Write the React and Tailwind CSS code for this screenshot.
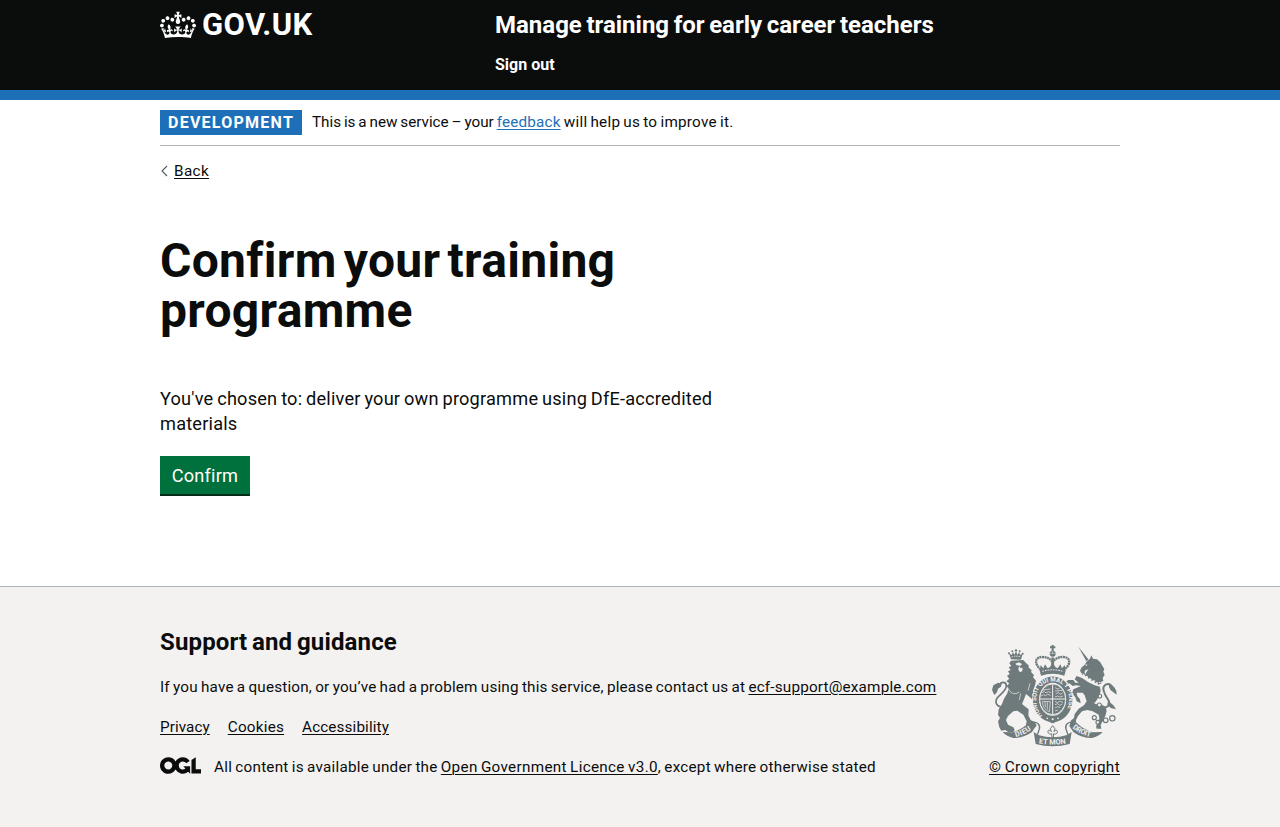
import React from 'react';

function Crown() {
  return (
    <svg className="h-[30px] w-9 shrink-0" viewBox="0 0 132 97" fill="currentColor" aria-hidden="true">
      <path
        fillRule="evenodd"
        d="M25 30.2c3.5 1.5 7.7-.2 9.1-3.7 1.5-3.6-.2-7.8-3.9-9.2-3.6-1.4-7.6.3-9.1 3.9-1.4 3.5.3 7.5 3.9 9zM9 39.5c3.6 1.5 7.8-.2 9.2-3.7 1.5-3.6-.2-7.8-3.9-9.1-3.6-1.5-7.6.2-9.1 3.8-1.4 3.5.3 7.5 3.8 9zM4.4 57.2c3.5 1.5 7.7-.2 9.1-3.8 1.5-3.6-.2-7.7-3.9-9.1-3.5-1.5-7.6.3-9.1 3.8-1.4 3.5.3 7.6 3.9 9.1zm38.3-21.4c3.5 1.5 7.7-.2 9.1-3.8 1.5-3.6-.2-7.7-3.9-9.1-3.6-1.5-7.6.3-9.1 3.8-1.3 3.6.4 7.7 3.9 9.1zm64.4-5.6c-3.6 1.5-7.8-.2-9.1-3.7-1.5-3.6.2-7.8 3.8-9.2 3.6-1.4 7.7.3 9.2 3.9 1.3 3.5-.4 7.5-3.9 9zm15.9 9.3c-3.6 1.5-7.7-.2-9.1-3.7-1.5-3.6.2-7.8 3.7-9.1 3.6-1.5 7.7.2 9.2 3.8 1.5 3.5-.3 7.5-3.8 9zm4.7 17.7c-3.6 1.5-7.8-.2-9.2-3.8-1.5-3.6.2-7.7 3.9-9.1 3.6-1.5 7.7.3 9.2 3.8 1.3 3.5-.4 7.6-3.9 9.1zM89.3 35.8c-3.6 1.5-7.8-.2-9.2-3.8-1.4-3.6.2-7.7 3.9-9.1 3.6-1.5 7.7.3 9.2 3.8 1.4 3.6-.3 7.7-3.9 9.1zM69.7 17.7l8.9 4.7V9.3l-8.9 2.8c-.2-.3-.5-.6-.9-.9L72.4 0H59.6l3.5 11.2c-.3.3-.6.5-.9.9l-8.8-2.8v13.1l8.8-4.7c.3.3.6.7.9.9l-5 15.4v.1c-.2.8-.4 1.6-.4 2.4 0 4.1 3.1 7.5 7 8.1h.2c.3 0 .7.1 1 .1.4 0 .7 0 1-.1h.2c4-.6 7.1-4.1 7.1-8.1 0-.8-.1-1.7-.4-2.4V34l-5.1-15.4c.4-.2.7-.6 1-.9zM66 92.8c16.9 0 32.8 1.1 47.1 3.2 4-16.9 8.9-26.7 14-33.5l-9.6-3.4c1 4.9 1.1 7.2 0 10.2-1.5-1.4-3-4.3-4.2-8.7L108.6 76c2.8-2 5-3.2 7.5-3.3-4.4 9.4-10 11.9-13.6 11.2-4.3-.8-6.3-4.6-5.6-7.9 1-4.7 5.7-5.9 8-.5 4.3-8.7-3-11.4-7.6-8.8 7.1-7.2 7.9-13.5 2.1-21.1-8 6.1-8.1 12.3-4.5 20.8-4.7-5.4-12.1-2.5-9.5 6.2 3.4-5.2 7.9-2 7.2 3.1-.6 4.3-6.4 7.8-13.5 7.2-10.3-.9-10.9-8-11.2-13.8 2.5-.5 7.1 1.8 11 7.3L80.2 60c-4.1 4.4-8 5.3-12.3 5.4 1.4-4.4 8-11.6 8-11.6H55.5s6.4 7.2 7.9 11.6c-4.2-.1-8-1-12.3-5.4l1.4 16.4c3.9-5.5 8.5-7.7 10.9-7.3-.3 5.8-.9 12.8-11.1 13.8-7.2.6-12.9-2.9-13.5-7.2-.7-5 3.8-8.3 7.1-3.1 2.7-8.7-4.6-11.6-9.4-6.2 3.7-8.5 3.6-14.7-4.6-20.8-5.8 7.6-5 13.9 2.2 21.1-4.7-2.6-11.9.1-7.7 8.8 2.3-5.5 7.1-4.2 8.1.5.7 3.3-1.3 7.1-5.7 7.9-3.5.7-9-1.8-13.5-11.2 2.5.1 4.7 1.3 7.5 3.3l-4.7-15.4c-1.2 4.4-2.7 7.2-4.3 8.7-1.1-3-.9-5.3 0-10.2l-9.5 3.4c5 6.9 9.9 16.7 14 33.5 14.8-2.1 30.8-3.2 47.7-3.2z"
      />
    </svg>
  );
}

function OglMark() {
  return (
    <svg className="h-[17px] w-[41px] shrink-0" viewBox="0 0 483.2 195.7" fill="currentColor" aria-hidden="true">
      <path d="M421.5 142.8V.1l-50.7 32.3v161.1h112.4v-50.7zm-122.3-9.6A47.12 47.12 0 0 1 221 97.8c0-26 21.1-47.1 47.1-47.1 16.7 0 31.4 8.7 39.7 21.8l42.7-27.2A97.63 97.63 0 0 0 268.1 0c-36.5 0-68.3 20.1-85.1 49.7A98 98 0 0 0 97.8 0C43.9 0 0 43.9 0 97.8s43.9 97.8 97.8 97.8c36.5 0 68.3-20.1 85.1-49.7a97.76 97.76 0 0 0 149.6 25.4l19.4 22.2h3v-87.8h-80l24.3 27.5zM97.8 145c-26 0-47.1-21.1-47.1-47.1s21.1-47.1 47.1-47.1 47.1 21.1 47.1 47.1S123.8 145 97.8 145" />
    </svg>
  );
}

function RoyalArms() {
  return (
    <svg className="h-[102px] w-[125px]" viewBox="18 15 375 306" fill="#6f7a7c" aria-hidden="true">
      {/* lion */}
      <path d="M75 58l-6-18 8 5 4-8 5 7 4-12 4 12 6-7 2 8 8-4-5 18z" />
      <g>
        <circle cx="69" cy="40" r="3" />
        <circle cx="79" cy="34" r="3" />
        <circle cx="90" cy="31" r="3.5" />
        <circle cx="101" cy="34" r="3" />
        <circle cx="110" cy="41" r="3" />
      </g>
      <path d="M77 51q14-5 28 0" fill="none" stroke="#f3f2f1" strokeWidth="3" strokeDasharray="4 3" />
      <path d="M75 62L112 60L120 69L129 77L127 82L137 91L135 96L144 105L141 112L150 122L146 140L142 152L146 166L156 178L158 188L144 186L132 172L120 162L114 178L108 192L118 200L128 208L127 226L134 240L146 247L152 256L148 262L126 262L120 254L122 244L112 224L94 212L82 214L66 228L60 240L66 254L82 262L86 270L82 276L66 276L58 270L46 272L40 262L36 244L42 234L36 224L38 208L48 192L54 176L64 160L68 146L62 138L70 130L61 124L70 116L63 108L71 102L66 94L74 90L68 82L76 78L70 70Z" />
      <path d="M88 71l10-4 10 5-4 5-12-1zM99 79l6 6 5-2-1 10-7 4-5-8z" fill="#f3f2f1" />
      <path d="M68 148Q80 170 100 156M104 160l-4 20M132 130l-6 22" fill="none" stroke="#f3f2f1" strokeWidth="2" />
      <path d="M56 201l-10 0c-15-2-22-16-10-30 11-12 25-20 25-34-1-12-17-14-21 0" fill="none" stroke="#6f7a7c" strokeWidth="5" />
      <path d="M36 128l-14 8-4 14 7 15 8-8 3-11 9-6 2-9z" />
      {/* unicorn */}
      <path d="M277 20l30 38-6 6z" />
      <path d="M304 62l8-6 4-10 5 10 12 2 10 9 6 10 6 10-3 8 4 10-6 8 2 10-8 3-8 0-10-5-14-6-14-13 6-10 4-4-10 3-4 8-8 1-4-8 5-10 8-6z" />
      <circle cx="301" cy="75" r="2.5" fill="#f3f2f1" />
      <path d="M288 104l6-6 5 9 7-3 2 10 9-4 1 11 9-5 1 11 9-4 0 9 9-4" fill="none" stroke="#6f7a7c" strokeWidth="3.5" />
      <path d="M288 114L306 126L326 136L342 140L344 154L338 170L330 184L324 190L336 194L348 194L358 200L362 212L358 228L348 246L344 256L346 266L332 266L330 258L338 250L340 234L338 224L320 214L304 210L288 214L276 228L270 240L270 246L256 250L254 242L264 234L266 222L278 206L294 196L302 184L296 166L290 158L272 158L274 168L282 178L284 190L272 184L268 172L258 160L262 148L276 142L284 138L270 136L260 138L250 130L242 134L240 126L246 120L262 120L268 128L278 128L266 118L272 108Z" />
      <g fill="none" stroke="#6f7a7c" strokeWidth="3.5">
        <circle cx="325" cy="233" r="6" />
        <circle cx="336" cy="247" r="6" />
        <circle cx="359" cy="241" r="7" />
        <circle cx="379" cy="235" r="8" />
        <circle cx="340" cy="195" r="6" fill="#f3f2f1" />
        <circle cx="341" cy="168" r="6" />
        <path d="M331 242l4-2M342 245l11-4" />
      </g>
      <path d="M352 204c14-2 22-10 16-22-8-14-20-28-15-42 5-9 18-11 23-2 3 5 2 8 4 14" fill="none" stroke="#6f7a7c" strokeWidth="6" />
      <path d="M368 133l10 2 8 8 5 10 1 11-10-7-9-8-4-8zM366 184l12 8 6 6 6 10-16-4-10-10z" />
      {/* garter and shield */}
      <ellipse cx="200" cy="177" rx="61" ry="71" fill="#f3f2f1" />
      {/* crown above the shield */}
      <g fill="none" stroke="#6f7a7c">
        <path d="M164 88c-21-17-17-38 6-37 16 0 29 8 30 21 1-13 14-21 30-21 23-1 27 20 6 37" strokeWidth="7" strokeDasharray="6 1.5" />
        <path d="M200 15v22M192 22h16" strokeWidth="6" />
        <path d="M200 52v30" strokeWidth="7" />
      </g>
      <circle cx="200" cy="41" r="9" />
      <path d="M192 40h16M200 33v7" stroke="#f3f2f1" strokeWidth="1.5" />
      <path d="M161 92l3-17 8 10 5-12 8 12 7-4 8-15 8 15 7 4 8-12 5 12 8-10 3 17-4 15q-35-12-70 0z" />
      <path d="M169 94q31-9 62 0" fill="none" stroke="#f3f2f1" strokeWidth="3" strokeDasharray="5 3" />
      <ellipse cx="200" cy="178" rx="50" ry="59" fill="none" stroke="#6f7a7c" strokeWidth="19" />
      <path id="garter" d="M169 227C140 198 142 125 200 125S260 198 231 227" fill="none" />
      <text fill="#f3f2f1" fontFamily="Roboto, sans-serif" fontSize="19" fontWeight="700">
        <textPath href="#garter" textLength="244" lengthAdjust="spacingAndGlyphs">HONI SOIT QUI MAL Y PENSE</textPath>
      </text>
      <ellipse cx="200" cy="178" rx="39" ry="46" />
      <g stroke="#f3f2f1" fill="none" strokeWidth="2">
        <ellipse cx="200" cy="178" rx="39" ry="46" strokeWidth="2.5" />
        <path d="M200 134v88M162 177h76" strokeWidth="3" />
        <path d="M171 150l22-3M167 159l8-5 5 5 7-4 8 3M165 168l8-4 5 3 7-4 9 3" />
        <path d="M207 143l8 4 6-3M207 153l22-2M209 162l8-5 5 6 8-4M207 171l8-3 6 3 10-3" />
        <path d="M207 184l8 4 6-4 10 3M207 194l8-3 6 5 8-4M207 204l8-4 8 3M207 213l9-3" />
        <path d="M170 184c-1 15 6 26 20 31l3-30zM177 186l1 16M184 186v22" />
      </g>
      <circle cx="200" cy="241" r="9" />
      <g fill="#f3f2f1">
        <circle cx="184" cy="235" r="2.5" />
        <circle cx="200" cy="238" r="3" />
        <circle cx="216" cy="235" r="2.5" />
      </g>
      {/* fleur-de-lis */}
      <path d="M200 257l7 9-3 9c6-8 13-4 9 4-3 4-7 4-10 2l-1 12h-4l-1-12c-3 2-7 2-10-2-4-8 3-12 9-4l-3-9z" fill="none" stroke="#6f7a7c" strokeWidth="3" />
      {/* motto scroll */}
      <path d="M50 276l30 1q28-8 50-30l16-2 4 13-12 18q-24 18-56 18-20-4-32-18z" />
      <path d="M350 276l-30 1q-28-8-50-30l-16-2-4 13 12 18q24 18 56 18 20-4 32-18z" />
      <path d="M136 247c18-4 28 8 24 20l-6 18M264 247c-18-4-28 8-24 20l6 18" fill="none" stroke="#6f7a7c" strokeWidth="4" />
      <path d="M143 276l14 9q43 14 86 0l14-9-6 36q-51 14-102 0z" />
      <path id="motto-left" d="M89 291q27-6 50-25" fill="none" />
      <path id="motto-middle" d="M158 310q42 7 84 0" fill="none" />
      <path id="motto-right" d="M259 264q26 22 58 27" fill="none" />
      <g fill="#f3f2f1" fontFamily="Roboto, sans-serif" fontSize="22" fontWeight="700">
        <text><textPath href="#motto-left" textLength="52">DIEU</textPath></text>
        <text><textPath href="#motto-middle" textLength="82">ET MON</textPath></text>
        <text><textPath href="#motto-right" textLength="60">DROIT</textPath></text>
      </g>
    </svg>
  );
}

const link = 'underline decoration-1 underline-offset-[1.5px]';

export default function App() {
  return (
    <div className="flex min-h-[827px] flex-col bg-[#f3f2f1] font-[Roboto,'Liberation_Sans',sans-serif] text-[#0b0c0c]">
      <header className="h-[100px] border-b-10 border-[#1d70b8] bg-[#0b0c0c] text-white">
        <div className="mx-auto flex w-[960px] pt-[10px]">
          <a href="#" className="flex h-[30px] w-[335px] items-center">
            <Crown />
            <span className="ml-[6px] text-[31px] leading-[30px] font-bold tracking-[0.4px]">GOV.UK</span>
          </a>
          <div>
            <a href="#" className="block text-[24px] leading-[30px] font-bold [word-spacing:-1.4px]">
              Manage training for early career teachers
            </a>
            <a href="#" className="mt-[15px] block text-base leading-5 font-bold">Sign out</a>
          </div>
        </div>
      </header>

      <div className="bg-white">
        <div className="mx-auto w-[960px]">
          <div className="flex h-[46px] border-b border-[#b1b4b6] pt-[10px]">
            <strong className="mr-[10px] h-[25px] w-[142px] bg-[#1d70b8] pl-2 text-base leading-[25px] font-bold tracking-[1.25px] whitespace-nowrap text-white">
              DEVELOPMENT
            </strong>
            <p className="text-[15.25px] leading-6 tracking-[-0.01px] whitespace-nowrap [word-spacing:-0.9px]">
              This is a new service – your <a href="#" className={`${link} tracking-[0.19px] text-[#1d70b8]`}>feedback</a>
              <span className="tracking-[0.25px]"> will help us to improve it.</span>
            </p>
          </div>
          <a href="#" className="mt-[15px] flex h-5 items-center">
            <svg className="mr-[6px] h-3 w-2" viewBox="0 0 8 12" fill="none" stroke="#505a5f" strokeWidth="1.1" aria-hidden="true">
              <path d="M7 1L2 6l5 5" />
            </svg>
            <span className={`${link} text-[15.25px] leading-5 tracking-[0.4px]`}>Back</span>
          </a>

          <main className="h-[405px] w-[630px] pt-[55px]">
            <h1 className="text-[48px] leading-[50px] font-bold tracking-[0.3px] [word-spacing:-5px]">
              Confirm your training
              <br />
              programme
            </h1>
            <p className="mt-[50px] text-[18.2px] leading-[25px] tracking-[0.19px] [word-spacing:-0.9px]">
              You've chosen to: deliver your own programme using DfE-accredited
              <br />
              materials
            </p>
            <button className="mt-5 flex h-10 w-[90px] items-center justify-center border-b-2 border-[#002d18] bg-[#00703c] text-[18.2px] leading-[19px] tracking-[0.2px] text-white">
              Confirm
            </button>
          </main>
        </div>
      </div>

      <footer className="flex-1 border-t border-[#b1b4b6] bg-[#f3f2f1]">
        <div className="mx-auto flex w-[960px] justify-between pt-10">
          <div className="text-[15.25px] leading-5">
            <h2 className="text-[24px] leading-[30px] font-bold tracking-[0.15px] [word-spacing:-1.4px]">Support and guidance</h2>
            <p className="mt-5 tracking-[0.19px] whitespace-nowrap [word-spacing:-0.8px]">
              If you have a question, or you’ve had a problem using this service, please contact us at{' '}
              <a href="#" className={link}>ecf-support@example.com</a>
            </p>
            <div className="mt-5 flex gap-[18px]">
              <a href="#" className={`${link} tracking-[0.07px]`}>Privacy</a>
              <a href="#" className={`${link} tracking-[0.23px]`}>Cookies</a>
              <a href="#" className={`${link} tracking-[0.12px]`}>Accessibility</a>
            </div>
            <div className="mt-5 flex items-start">
              <OglMark />
              <span className="ml-[13px] tracking-[0.24px] whitespace-nowrap [word-spacing:-0.8px]">
                All content is available under the <a href="#" className={`${link} tracking-[0.31px]`}>Open Government Licence v3.0</a>, except where otherwise stated
              </span>
            </div>
          </div>
          <a href="#" className="flex flex-col items-center pt-[18px]">
            <RoyalArms />
            <span className={`${link} mt-[10px] text-[15.25px] leading-5 tracking-[0.37px] whitespace-nowrap [word-spacing:-0.8px]`}>© Crown copyright</span>
          </a>
        </div>
      </footer>
    </div>
  );
}
